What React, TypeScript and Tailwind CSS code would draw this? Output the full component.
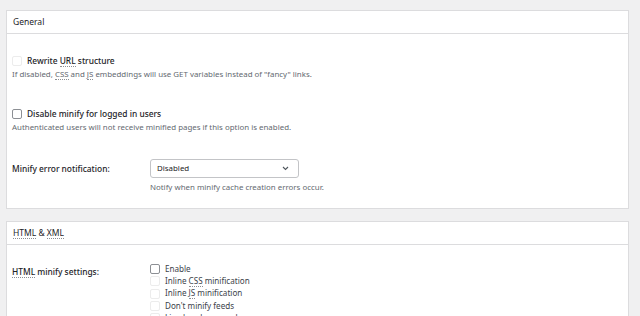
import React from "react";

const font = { fontFamily: '"Noto Sans", "Open Sans", sans-serif' };

function Abbr({ children }: { children: React.ReactNode }) {
  return (
    <abbr className="border-b border-dotted border-[#8c8f94] [text-decoration:none]">
      {children}
    </abbr>
  );
}

function Box({ disabled = false }: { disabled?: boolean }) {
  return (
    <span
      className={
        disabled
          ? "inline-block w-[10px] h-[10px] rounded-[2px] border border-[#ececec] bg-white shrink-0"
          : "inline-block w-[10px] h-[10px] rounded-[2px] border border-[#8c8f94] bg-white shrink-0"
      }
    />
  );
}

function Panel({ title, children }: { title: React.ReactNode; children: React.ReactNode }) {
  return (
    <div className="bg-white border border-[#dcdcde]">
      <div className="h-[23px] flex items-center px-[6px] border-b border-[#dcdcde] text-[8.5px] text-[#1d2327]">
        {title}
      </div>
      <div>{children}</div>
    </div>
  );
}

export default function App() {
  return (
    <div className="w-[640px] h-[316px] overflow-hidden bg-[#f0f0f1] pt-[10px] pl-[6px] pr-[11px]" style={font}>
      <Panel title="General">
        <div className="px-[5px] pt-[21px] pb-[15px] text-[#1d2327]">
          <div className="flex items-center gap-[5px] h-[12px]">
            <Box disabled />
            <span className="text-[8.4px] font-medium">
              Rewrite <Abbr>URL</Abbr> structure
            </span>
          </div>
          <p className="text-[7.9px] text-[#646970] mt-[1px] leading-[12px]">
            If disabled, <Abbr>CSS</Abbr> and <Abbr>JS</Abbr> embeddings will use GET variables instead of "fancy" links.
          </p>

          <div className="flex items-center gap-[5px] h-[12px] mt-[28px]">
            <Box />
            <span className="text-[8.4px] font-medium">Disable minify for logged in users</span>
          </div>
          <p className="text-[7.9px] text-[#646970] mt-[1px] leading-[12px]">
            Authenticated users will not receive minified pages if this option is enabled.
          </p>

          <div className="flex mt-[26px]">
            <div className="w-[138px] pt-[4px] text-[8.4px] font-medium leading-[12px]">Minify error notification:</div>
            <div>
              <div className="w-[149px] h-[19px] border border-[#c3c4c7] rounded-[3px] flex items-center justify-between pl-[6px] pr-[9px] text-[7.9px]">
                <span>Disabled</span>
                <svg width="7" height="5" viewBox="0 0 7 5" fill="none">
                  <path d="M1 1 L3.5 3.5 L6 1" stroke="#50575e" strokeWidth="1.1" />
                </svg>
              </div>
              <p className="text-[7.9px] text-[#646970] mt-[3px] leading-[12px]">
                Notify when minify cache creation errors occur.
              </p>
            </div>
          </div>
        </div>
      </Panel>

      <div className="h-[12px]" />

      <Panel
        title={
          <span>
            <Abbr>HTML</Abbr> &amp; <Abbr>XML</Abbr>
          </span>
        }
      >
        <div className="px-[5px] pt-[18px] flex text-[#1d2327]">
          <div className="w-[138px] pt-[3px] text-[8.4px] font-medium leading-[12px]">
            <Abbr>HTML</Abbr> minify settings:
          </div>
          <div className="text-[8.1px] text-[#3c434a] leading-[12.2px]">
            <div className="flex items-center gap-[5px]">
              <Box />
              <span>Enable</span>
            </div>
            <div className="flex items-center gap-[5px]">
              <Box disabled />
              <span>
                Inline <Abbr>CSS</Abbr> minification
              </span>
            </div>
            <div className="flex items-center gap-[5px]">
              <Box disabled />
              <span>
                Inline <Abbr>JS</Abbr> minification
              </span>
            </div>
            <div className="flex items-center gap-[5px]">
              <Box disabled />
              <span>Don't minify feeds</span>
            </div>
            <div className="flex items-center gap-[5px]">
              <Box disabled />
              <span>Line break removal</span>
            </div>
          </div>
        </div>
      </Panel>
    </div>
  );
}
